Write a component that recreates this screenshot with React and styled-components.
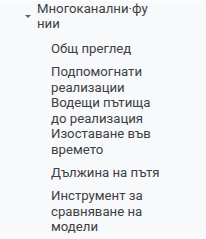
import React from 'react';
import styled, { createGlobalStyle } from 'styled-components';

const GlobalStyle = createGlobalStyle`
body {
  margin: 0;
  background: #f8f9fa;
  font-family: Roboto, "Noto Sans", Arial, sans-serif;
}
`

const Nav = styled.nav`
width: 206px;
height: 239px;
overflow: hidden;
background: #f8f9fa;
border-top: 1px solid #fdfdfd;
box-sizing: border-box;
`

const Group = styled.div`
display: flex;
align-items: center;
padding: 0 0 0 25px;
gap: 6px;
`

const Caret = styled.span`
flex: none;
width: 0;
height: 0;
margin-top: 1px;
border-left: 3.5px solid transparent;
border-right: 3.5px solid transparent;
border-top: 3.5px solid #5f6368;
`

const GroupTitle = styled.div`
font-size: 13.2px;
line-height: 15px;
color: #3c4043;
`

const List = styled.ul`
list-style: none;
margin: 0;
padding: 2px 45px 0 51px;
`

const Item = styled.li`
min-height: 31px;
display: flex;
align-items: center;
font-size: 13.2px;
line-height: 15.5px;
color: #3c4043;
`

const items = [
    'Общ преглед',
    'Подпомогнати реализации',
    'Водещи пътища до реализация',
    'Изоставане във времето',
    'Дължина на пътя',
    'Инструмент за сравняване на модели',
]

const App = () => {
    return (
        <>
            <GlobalStyle />
            <Nav>
                <Group>
                    <Caret />
                    <GroupTitle>Многоканални·фу<br />нии</GroupTitle>
                </Group>
                <List>
                    {items.map(label => <Item key={label}>{label}</Item>)}
                </List>
            </Nav>
        </>
    )
}

export default App
